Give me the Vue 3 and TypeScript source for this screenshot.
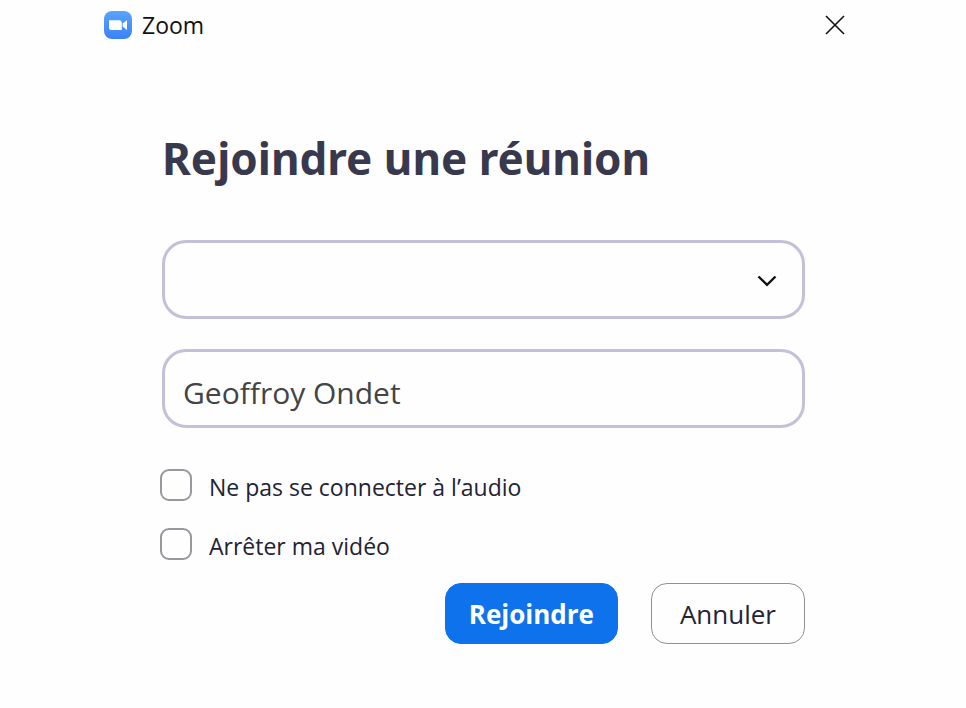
<script setup lang="ts">
import { ref } from 'vue'

const meeting = ref<string>('')
const userName = ref<string>('Geoffroy Ondet')
const noAudio = ref<boolean>(false)
const noVideo = ref<boolean>(false)
</script>

<template>
  <main class="window">
    <header class="titlebar">
      <svg class="logo" viewBox="0 0 28 28" aria-hidden="true">
        <defs>
          <linearGradient id="logo-fill" x1="0" y1="0" x2="0" y2="1">
            <stop offset="0" stop-color="#5ba3fb" />
            <stop offset="1" stop-color="#3a82f6" />
          </linearGradient>
        </defs>
        <rect width="28" height="28" rx="8" fill="url(#logo-fill)" />
        <path
          d="M5 9.200h10.200a2.600 2.600 0 0 1 2.600 2.600V19H7.600A2.600 2.600 0 0 1 5 16.400z"
          fill="#fff"
        />
        <path d="M18.600 12.600 23 9.200v9.800l-4.400-3.400z" fill="#fff" />
      </svg>
      <span class="app-name">Zoom</span>
      <button class="close" type="button" aria-label="Fermer">
        <svg viewBox="0 0 20 20" aria-hidden="true">
          <path d="M1 1 19 19M19 1 1 19" fill="none" stroke="#111" stroke-width="1.600" />
        </svg>
      </button>
    </header>

    <form class="content" @submit.prevent>
      <h1>Rejoindre une réunion</h1>

      <div class="fields">
        <div class="combo">
          <select v-model="meeting" class="field" aria-label="Numéro de réunion">
            <option value=""></option>
          </select>
          <svg class="chevron" viewBox="0 0 20 12" aria-hidden="true">
            <path d="M1.500 1.500 10 9.800l8.500-8.300" fill="none" stroke="#111" stroke-width="2.400" />
          </svg>
        </div>
        <input v-model="userName" class="field" type="text" aria-label="Votre nom" />
      </div>

      <div class="options">
        <label class="option">
          <input v-model="noAudio" type="checkbox" />
          <span>Ne pas se connecter à l’audio</span>
        </label>
        <label class="option">
          <input v-model="noVideo" type="checkbox" />
          <span>Arrêter ma vidéo</span>
        </label>
      </div>

      <div class="actions">
        <button class="button primary" type="submit">Rejoindre</button>
        <button class="button" type="button">Annuler</button>
      </div>
    </form>
  </main>
</template>

<style>
body {
  background: #fefefe;
}
</style>

<style scoped>
.window {
  box-sizing: border-box;
  padding: 8px 120px 64px 104px;
  font-family: 'Open Sans', 'Noto Sans', sans-serif;
  color: #232333;
}

.titlebar {
  display: flex;
  align-items: center;
  height: 34px;
}

.logo {
  width: 28px;
  height: 28px;
}

.app-name {
  margin-left: 10px;
  font-size: 23px;
  line-height: 32px;
  color: #111;
}

.close {
  display: flex;
  margin-left: auto;
  padding: 0;
  border: 0;
  background: none;
}

.close svg {
  width: 22px;
  height: 20px;
}

.content {
  padding: 84px 41px 0 58px;
}

h1 {
  margin: 0;
  font-family: 'Noto Sans', sans-serif;
  font-size: 44px;
  line-height: 64px;
  font-weight: 700;
  color: #39394d;
  white-space: nowrap;
}

.fields {
  display: grid;
  gap: 30px;
  margin-top: 50px;
}

.combo {
  position: relative;
  display: grid;
}

.field {
  box-sizing: border-box;
  width: 100%;
  height: 79px;
  padding: 7px 18px 0;
  border: 3px solid #c3c1d7;
  border-radius: 24px;
  background: #fefefe;
  font: inherit;
  font-size: 30px;
  color: #444;
  appearance: none;
}

.chevron {
  position: absolute;
  top: 35px;
  right: 28px;
  width: 20px;
  height: 12px;
  pointer-events: none;
}

.options {
  display: grid;
  gap: 27px;
  margin-top: 41px;
}

.option {
  display: flex;
  align-items: center;
  gap: 17px;
  height: 32px;
  font-size: 23px;
  line-height: 32px;
}

.option span {
  padding-top: 4px;
}

.option input {
  flex: none;
  width: 32px;
  height: 32px;
  margin: 0 0 0 -2px;
  border: 2px solid #98989e;
  border-radius: 9px;
  background: #fefefe;
  appearance: none;
}

.actions {
  display: flex;
  justify-content: flex-end;
  gap: 33px;
  margin-top: 23px;
}

.button {
  height: 61px;
  padding: 0 28px;
  border: 1px solid #909096;
  border-radius: 16px;
  background: #fefefe;
  font: inherit;
  font-size: 26px;
  color: #232333;
}

.primary {
  padding: 0 23px;
  border-color: #0e72ed;
  background: #0e72ed;
  font-weight: 700;
  color: #fff;
}
</style>
